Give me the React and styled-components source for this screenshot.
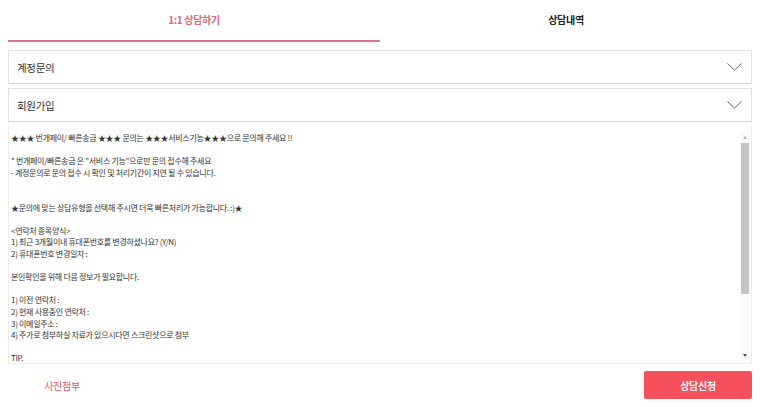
import React from 'react';
import styled, { createGlobalStyle } from 'styled-components';

const GlobalStyle = createGlobalStyle`
  html, body {
    margin: 0;
    padding: 0;
    background: #fff;
  }
  body {
    font-family: "Noto Sans CJK KR", "Noto Sans", sans-serif;
  }
`;

const Page = styled.div`
  width: 760px;
  height: 407px;
  box-sizing: border-box;
  padding: 0 8px;
  display: flex;
  flex-direction: column;
  overflow: hidden;
`;

const Tabs = styled.div`
  display: flex;
  height: 42px;
  margin-bottom: 8px;
`;

const Tab = styled.button`
  flex: 1;
  border: none;
  background: none;
  padding: 0 0 2px;
  font-family: inherit;
  font-size: 10px;
  font-weight: 700;
  letter-spacing: -0.3px;
  color: ${(p) => (p.$active ? '#e2667a' : '#222')};
  border-bottom: 2px solid ${(p) => (p.$active ? '#d9788a' : 'transparent')};
  cursor: pointer;
`;

const SelectBox = styled.div`
  height: 34px;
  box-sizing: border-box;
  border: 1px solid #e2e2e2;
  border-bottom-color: #d2d2d2;
  margin-bottom: 4px;
  display: flex;
  align-items: center;
  justify-content: space-between;
  padding: 0 9px 0 8px;
  font-size: 10.5px;
  letter-spacing: -0.3px;
  color: #333;
`;

const Chevron = () => (
  <svg width="15" height="8" viewBox="0 0 15 8" fill="none">
    <path d="M0.5 0.5L7.5 7L14.5 0.5" stroke="#666" strokeWidth="1" />
  </svg>
);

const MemoWrap = styled.div`
  position: relative;
  height: 238px;
`;

const Memo = styled.textarea`
  display: block;
  width: 100%;
  height: 100%;
  box-sizing: border-box;
  margin: 0;
  border: 1px solid #eee;
  border-top: none;
  padding: 6px 16px 0 2px;
  resize: none;
  outline: none;
  font-family: "Noto Sans CJK KR", "Noto Sans", sans-serif;
  font-size: 8px;
  line-height: 11.6px;
  letter-spacing: -0.3px;
  color: #333;
  overflow-y: auto;
  scrollbar-width: none;

  &::-webkit-scrollbar {
    display: none;
  }
`;

const ScrollTrack = styled.div`
  position: absolute;
  top: 6px;
  right: 2px;
  bottom: 3px;
  width: 10px;
  display: flex;
  flex-direction: column;
  align-items: center;
  background: #fbfbfb;
  pointer-events: none;
`;

const Arrow = styled.div`
  height: 11px;
  width: 100%;
  display: flex;
  align-items: center;
  justify-content: center;

  &::before {
    content: '';
    width: 0;
    height: 0;
    border-left: 2.5px solid transparent;
    border-right: 2.5px solid transparent;
    ${(p) =>
      p.$down
        ? 'border-top: 3px solid #505050;'
        : 'border-bottom: 3px solid #b4b4b4;'}
  }
`;

const Thumb = styled.div`
  width: 8px;
  height: 151px;
  background: #c4c4c4;
`;

const Spacer = styled.div`
  flex: 1;
`;

const Footer = styled.div`
  flex: 1;
  display: flex;
  align-items: flex-start;
  justify-content: space-between;
  padding-top: 7px;
`;

const ActionButton = styled.button`
  width: 108px;
  height: 28px;
  border: none;
  border-radius: 2px;
  font-family: inherit;
  font-size: 10px;
  letter-spacing: -0.3px;
  cursor: pointer;
  background: ${(p) => (p.$primary ? '#f6505c' : '#fff')};
  color: ${(p) => (p.$primary ? '#fff' : '#e3585e')};
  font-weight: ${(p) => (p.$primary ? 700 : 400)};
`;

const guide = [
  '★★★ 번개페이/ 빠른송금 ★★★ 문의는 ★★★서비스기능★★★으로 문의해 주세요 !!',
  '',
  '* 번개페이/빠른송금 은 "서비스 기능"으로만 문의 접수해 주세요',
  '- 계정문의로 문의 접수 시 확인 및 처리기간이 지연 될 수 있습니다.',
  '',
  '',
  '★문의에 맞는 상담유형을 선택해 주시면 더욱 빠른처리가 가능합니다. :)★',
  '',
  '<연락처 종목양식>',
  '1) 최근 3개월이내 휴대폰번호를 변경하셨나요? (Y/N)',
  '2) 휴대폰번호 변경일자 :',
  '',
  '본인확인을 위해 다음 정보가 필요합니다.',
  '',
  '1) 이전 연락처 :',
  '2) 현재 사용중인 연락처 :',
  '3) 이메일주소 :',
  '4) 주가로 첨부하실 자료가 있으시다면 스크린샷으로 첨부',
  '',
  'TIP.',
  '- 연락처 변경 이력이 있는 경우 이전 연락처를 함께 적어주세요.',
  '- 가입 시 사용한 이메일주소를 정확히 입력해 주세요.',
].join('\n');

export default function App() {
  return (
    <>
      <GlobalStyle />
      <Page>
        <Tabs>
          <Tab $active>1:1 상담하기</Tab>
          <Tab>상담내역</Tab>
        </Tabs>
        <SelectBox>
          계정문의
          <Chevron />
        </SelectBox>
        <SelectBox>
          회원가입
          <Chevron />
        </SelectBox>
        <MemoWrap>
          <Memo defaultValue={guide} />
          <ScrollTrack>
            <Arrow />
            <Thumb />
            <Spacer />
            <Arrow $down />
          </ScrollTrack>
        </MemoWrap>
        <Footer>
          <ActionButton>사진첨부</ActionButton>
          <ActionButton $primary>상담신청</ActionButton>
        </Footer>
      </Page>
    </>
  );
}
